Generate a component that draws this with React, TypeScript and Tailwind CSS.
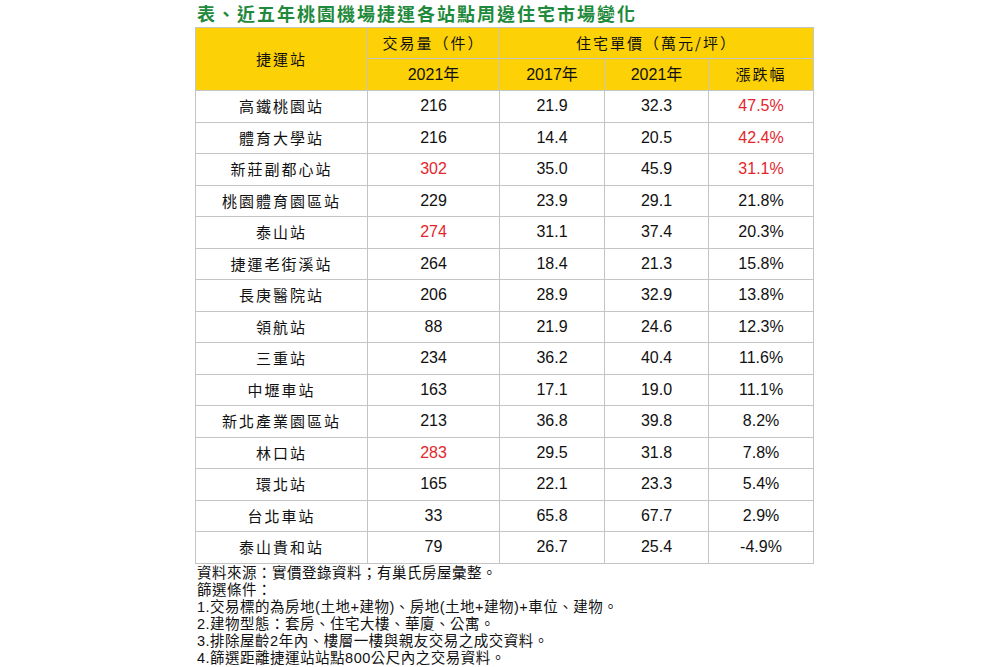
import React from "react";

const rows = [
  { name: "高鐵桃園站", vol: "216", p17: "21.9", p21: "32.3", chg: "47.5%", volRed: false, chgRed: true },
  { name: "體育大學站", vol: "216", p17: "14.4", p21: "20.5", chg: "42.4%", volRed: false, chgRed: true },
  { name: "新莊副都心站", vol: "302", p17: "35.0", p21: "45.9", chg: "31.1%", volRed: true, chgRed: true },
  { name: "桃園體育園區站", vol: "229", p17: "23.9", p21: "29.1", chg: "21.8%", volRed: false, chgRed: false },
  { name: "泰山站", vol: "274", p17: "31.1", p21: "37.4", chg: "20.3%", volRed: true, chgRed: false },
  { name: "捷運老街溪站", vol: "264", p17: "18.4", p21: "21.3", chg: "15.8%", volRed: false, chgRed: false },
  { name: "長庚醫院站", vol: "206", p17: "28.9", p21: "32.9", chg: "13.8%", volRed: false, chgRed: false },
  { name: "領航站", vol: "88", p17: "21.9", p21: "24.6", chg: "12.3%", volRed: false, chgRed: false },
  { name: "三重站", vol: "234", p17: "36.2", p21: "40.4", chg: "11.6%", volRed: false, chgRed: false },
  { name: "中壢車站", vol: "163", p17: "17.1", p21: "19.0", chg: "11.1%", volRed: false, chgRed: false },
  { name: "新北產業園區站", vol: "213", p17: "36.8", p21: "39.8", chg: "8.2%", volRed: false, chgRed: false },
  { name: "林口站", vol: "283", p17: "29.5", p21: "31.8", chg: "7.8%", volRed: true, chgRed: false },
  { name: "環北站", vol: "165", p17: "22.1", p21: "23.3", chg: "5.4%", volRed: false, chgRed: false },
  { name: "台北車站", vol: "33", p17: "65.8", p21: "67.7", chg: "2.9%", volRed: false, chgRed: false },
  { name: "泰山貴和站", vol: "79", p17: "26.7", p21: "25.4", chg: "-4.9%", volRed: false, chgRed: false },
];

const notes = [
  "資料來源：實價登錄資料；有巢氏房屋彙整。",
  "篩選條件：",
  "1.交易標的為房地(土地+建物)、房地(土地+建物)+車位、建物。",
  "2.建物型態：套房、住宅大樓、華廈、公寓。",
  "3.排除屋齡2年內、樓層一樓與親友交易之成交資料。",
  "4.篩選距離捷運站站點800公尺內之交易資料。",
];

const cjk = "font-['Noto_Sans_CJK_TC',sans-serif]";
const num = "font-['Liberation_Sans','Noto_Sans_CJK_TC',sans-serif]";
const cell = "border border-[#c4c4c4] text-center p-0";

export default function App() {
  return (
    <div className="w-[1000px] h-[667px] bg-white overflow-hidden">
      <div className="ml-[195px] w-[618px]">
        <h1 className={`${cjk} text-[18px] leading-[27px] tracking-[2px] font-semibold text-[#1f8a3c] pl-[2px]`}>
          表、近五年桃園機場捷運各站點周邊住宅市場變化
        </h1>
        <table className="border-collapse table-fixed w-[618px]">
          <colgroup>
            <col className="w-[172px]" />
            <col className="w-[132px]" />
            <col className="w-[105px]" />
            <col className="w-[104px]" />
            <col className="w-[105px]" />
          </colgroup>
          <thead className="bg-[#fcd206]">
            <tr className="h-[31px]">
              <th rowSpan={2} className={`${cell} ${cjk} text-[15px] font-normal tracking-[2px] text-[#111]`}>捷運站</th>
              <th className={`${cell} ${cjk} text-[15px] font-normal tracking-[2px] text-[#111]`}>交易量（件）</th>
              <th colSpan={3} className={`${cell} ${cjk} text-[15px] font-normal tracking-[2px] text-[#111]`}>住宅單價（萬元/坪）</th>
            </tr>
            <tr className="h-[32px]">
              <th className={`${cell} ${num} text-[16px] font-normal text-[#111]`}>2021年</th>
              <th className={`${cell} ${num} text-[16px] font-normal text-[#111]`}>2017年</th>
              <th className={`${cell} ${num} text-[16px] font-normal text-[#111]`}>2021年</th>
              <th className={`${cell} ${cjk} text-[15px] font-normal tracking-[2px] text-[#111]`}>漲跌幅</th>
            </tr>
          </thead>
          <tbody>
            {rows.map((r) => (
              <tr key={r.name} className="h-[31.5px]">
                <td className={`${cell} ${cjk} text-[15px] tracking-[2px] text-[#111]`}>{r.name}</td>
                <td className={`${cell} ${num} text-[16px] ${r.volRed ? "text-[#e3262d]" : "text-[#111]"}`}>{r.vol}</td>
                <td className={`${cell} ${num} text-[16px] text-[#111]`}>{r.p17}</td>
                <td className={`${cell} ${num} text-[16px] text-[#111]`}>{r.p21}</td>
                <td className={`${cell} ${num} text-[16px] ${r.chgRed ? "text-[#e3262d]" : "text-[#111]"}`}>{r.chg}</td>
              </tr>
            ))}
          </tbody>
        </table>
        <div className={`${num} text-[14.5px] leading-[17px] tracking-[0.5px] text-[#111] pt-[1px] pl-[2px]`}>
          {notes.map((n) => (
            <div key={n}>{n}</div>
          ))}
        </div>
      </div>
    </div>
  );
}
